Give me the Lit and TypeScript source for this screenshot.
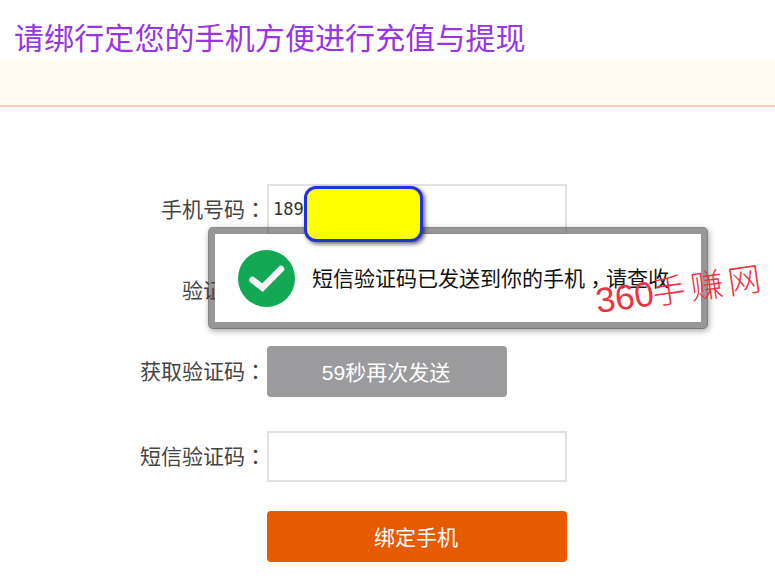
import { LitElement, html, css } from 'lit';
import { customElement } from 'lit/decorators.js';

@customElement('app-root')
export class AppRoot extends LitElement {
  static styles = css`
    :host {
      display: block;
      position: relative;
      width: 775px;
      height: 580px;
      overflow: hidden;
      background: #fff;
      font-family: "Liberation Sans", "Noto Sans CJK SC", sans-serif;
      color: #444;
    }
    .title {
      height: 60px;
      box-sizing: border-box;
      margin: 0;
      padding: 21px 0 0 14px;
      font-size: 30px;
      letter-spacing: 0.1px;
      line-height: 36px;
      font-weight: normal;
      color: #9933e6;
      white-space: nowrap;
    }
    .band {
      height: 45px;
      background: #fffbf0;
      border-bottom: 2px solid #ffccbb;
    }
    .form {
      display: flex;
      flex-direction: column;
      padding-top: 77px;
    }
    .row {
      display: flex;
      align-items: center;
      height: 51px;
      margin-bottom: 30px;
    }
    .row.gap-lg {
      margin-bottom: 34px;
    }
    .row.last {
      margin-bottom: 29px;
    }
    .label {
      width: 267px;
      box-sizing: border-box;
      padding: 0 1px 3px 0;
      text-align: right;
      font-size: 21px;
      white-space: nowrap;
    }
    .colon {
      font-family: "Noto Sans CJK TC", sans-serif;
    }
    .comma {
      display: inline-block;
      font-family: "Noto Sans CJK TC", sans-serif;
      transform: translateY(6px);
    }
    .input {
      width: 300px;
      height: 51px;
      box-sizing: border-box;
      border: 2px solid #e2e2de;
      background: #fff;
      padding-left: 4px;
      font-family: "DejaVu Sans Mono", monospace;
      font-size: 17px;
      line-height: 47px;
      color: #333;
    }
    .btn {
      height: 51px;
      box-sizing: border-box;
      border-radius: 4px;
      color: #fff;
      font-size: 21px;
      padding: 0 2px 2px 0;
      display: flex;
      align-items: center;
      justify-content: center;
    }
    .btn.grey {
      width: 240px;
      background: #9b9b9d;
    }
    .btn.orange {
      width: 300px;
      margin-left: 267px;
      background: #e65a00;
    }
    .toast {
      position: absolute;
      left: 208px;
      top: 227px;
      width: 500px;
      height: 102px;
      box-sizing: border-box;
      border: 7px solid rgba(70, 70, 70, 0.56);
      background-clip: padding-box;
      border-radius: 5px;
      background-color: #fff;
      box-shadow: 1px 2px 6px rgba(0, 0, 0, 0.35);
      display: flex;
      align-items: center;
      padding-left: 23px;
      gap: 17px;
      font-size: 21px;
      color: #111;
      white-space: nowrap;
    }
    .toast svg {
      flex: none;
      display: block;
    }
    .toast .msg {
      padding-bottom: 3px;
    }
    .mask {
      position: absolute;
      left: 304px;
      top: 186px;
      width: 119px;
      height: 56px;
      box-sizing: border-box;
      background: #ffff00;
      border: 3px solid #2233dd;
      border-radius: 12px;
      box-shadow: 2px 2px 4px rgba(0, 0, 0, 0.6);
    }
    .mark {
      position: absolute;
      left: 599px;
      top: 279px;
      display: flex;
      align-items: baseline;
      color: #ee3340;
      font-size: 35px;
      line-height: 44px;
      white-space: nowrap;
      transform: rotate(-8deg);
      transform-origin: left bottom;
    }
    .mark .han {
      font-size: 33px;
      font-weight: 300;
      letter-spacing: 5px;
      margin-left: -1px;
    }
  `;

  render() {
    return html`
      <h1 class="title">请绑行定您的手机方便进行充值与提现</h1>
      <div class="band"></div>
      <div class="form">
        <div class="row">
          <div class="label">手机号码<span class="colon">：</span></div>
          <div class="input">189</div>
        </div>
        <div class="row">
          <div class="label">验证码<span class="colon">：</span></div>
        </div>
        <div class="row gap-lg">
          <div class="label">获取验证码<span class="colon">：</span></div>
          <div class="btn grey">59秒再次发送</div>
        </div>
        <div class="row last">
          <div class="label">短信验证码<span class="colon">：</span></div>
          <div class="input"></div>
        </div>
        <div class="row">
          <div class="btn orange">绑定手机</div>
        </div>
      </div>
      <div class="toast">
        <svg width="57" height="57" viewBox="0 0 57 57">
          <circle cx="28.5" cy="28.5" r="28.5" fill="#12a854"></circle>
          <path d="M14.5 30L24.5 37.7L43 19" fill="none" stroke="#f6f6f6" stroke-width="6.5" stroke-linecap="round"></path>
        </svg>
        <span class="msg">短信验证码已发送到你的手机<span class="comma">，</span>请查收</span>
      </div>
      <div class="mask"></div>
      <div class="mark">360<span class="han">手赚网</span></div>
    `;
  }
}
